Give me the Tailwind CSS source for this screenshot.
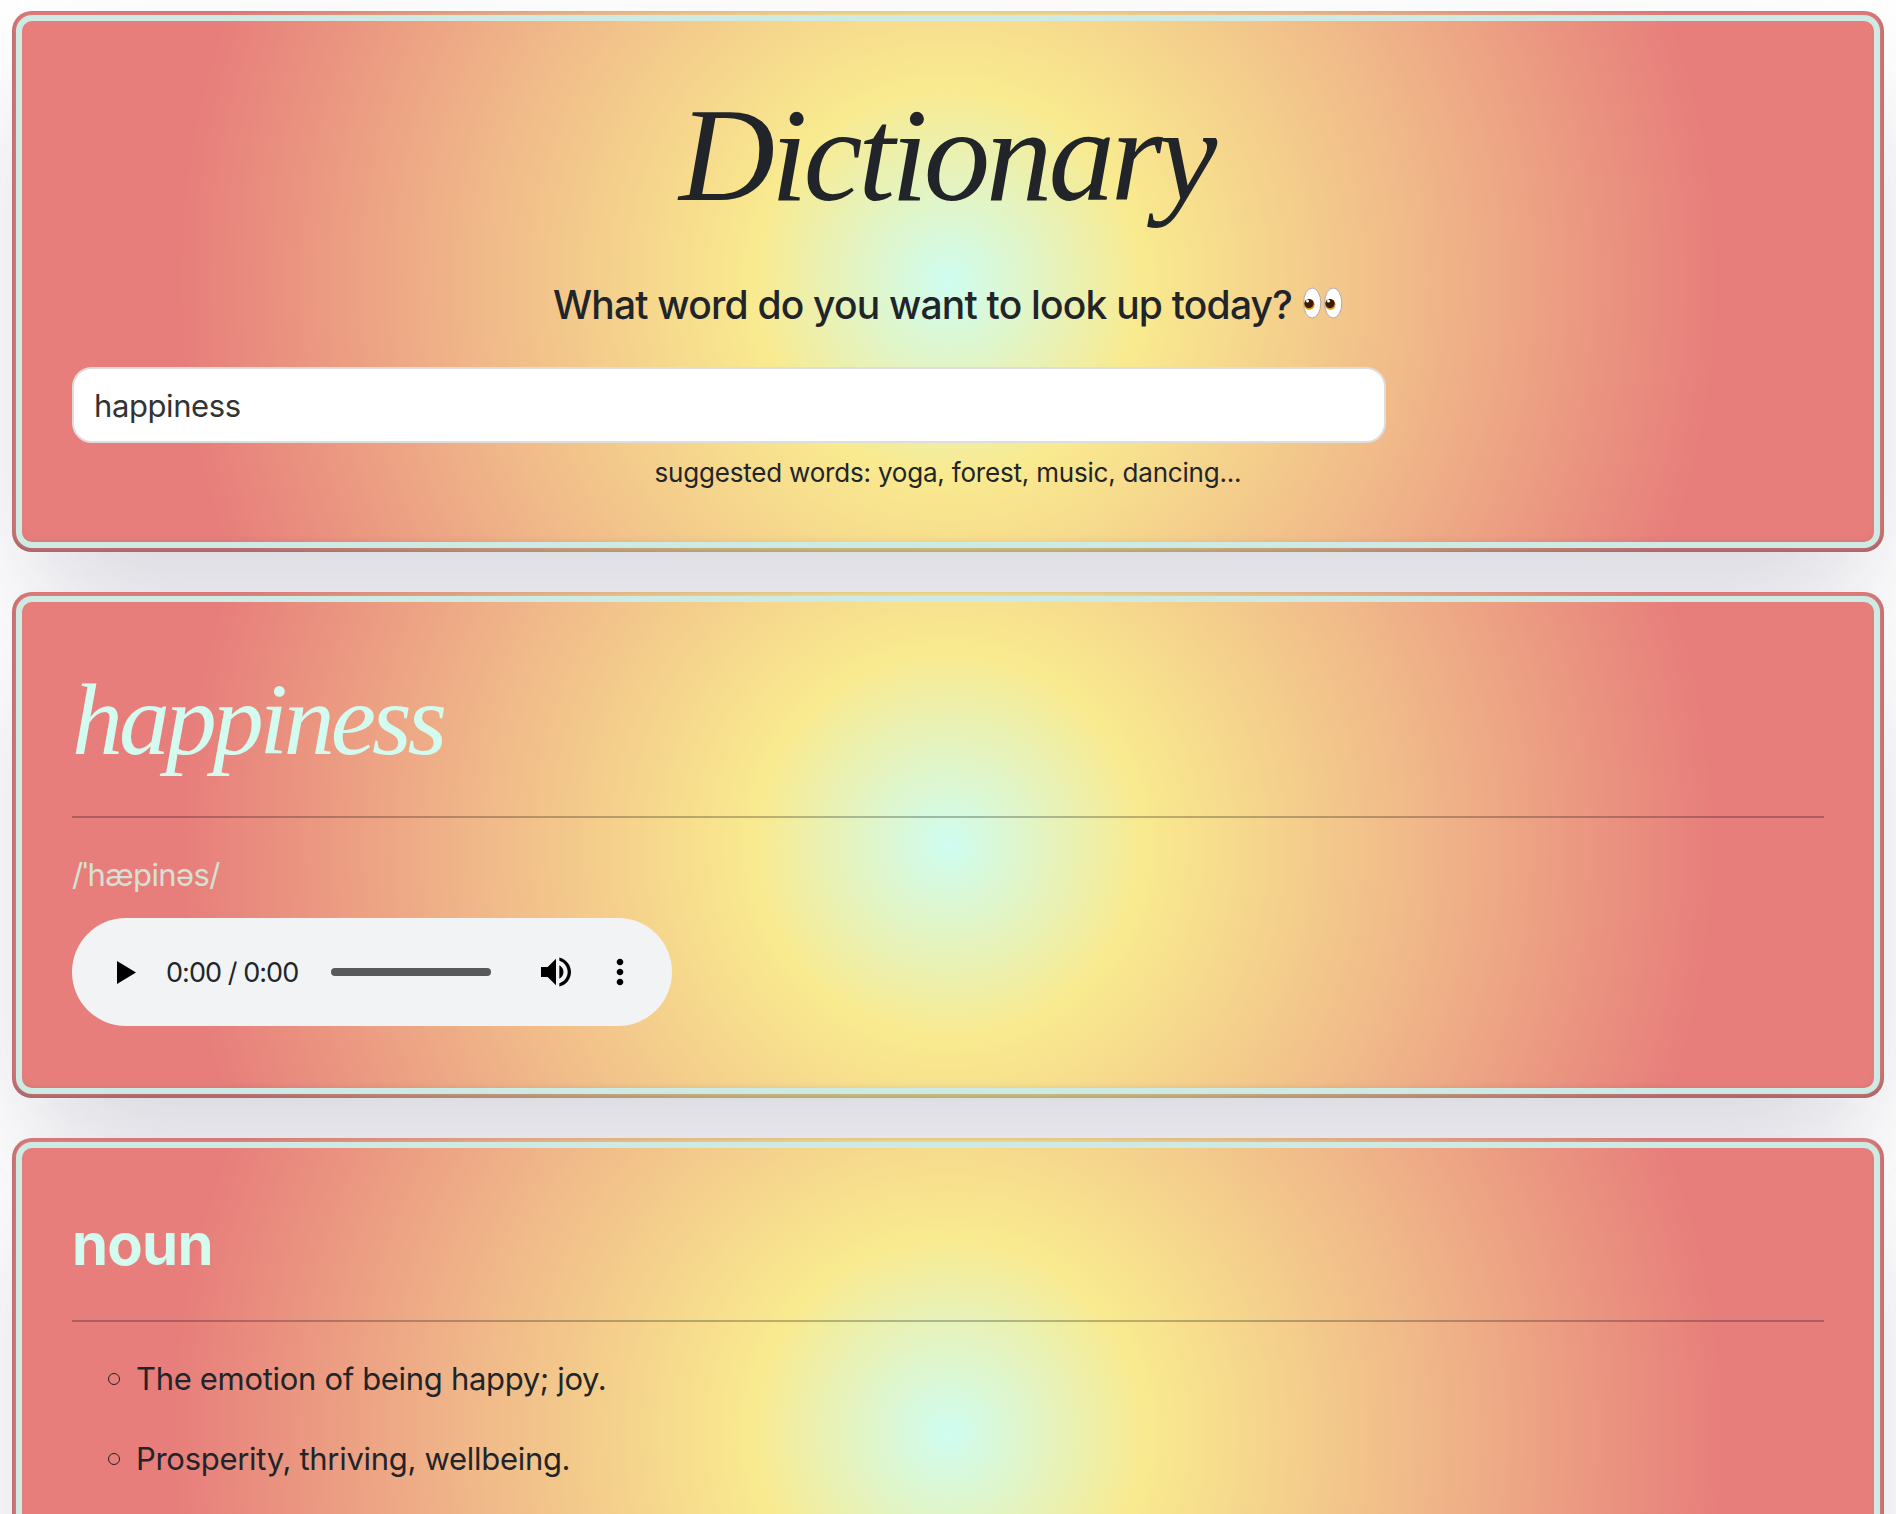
<!DOCTYPE html>
<html lang="en">
<head>
<meta charset="utf-8">
<title>Dictionary</title>
<script src="https://cdn.jsdelivr.net/npm/@tailwindcss/browser@4"></script>
</head>
<body class="bg-white font-['Inter',sans-serif] text-[#212529]">
<main class="flex flex-col gap-10 px-3 pt-[11px] w-[1896px] h-[1514px] overflow-hidden">

<section class="shrink-0 h-[541px] rounded-[20px] p-1 bg-[radial-gradient(circle,#cffdf1_0%,#f9ea8f_20%,#f0b789_49%,#e77e7b_79%)] shadow-[0_60px_120px_-24px_rgba(50,50,93,0.22),inset_0_-4px_12px_0_rgba(10,37,64,0.35)]">
<div class="h-full rounded-2xl border-6 border-[#cdebe4] px-[50px] flex flex-col">
<h1 class="h-[178px] mt-[45px] text-center font-['Liberation_Serif',serif] italic text-[133px] leading-[178px]"><span class="tracking-[-4.2px] relative -left-0.5">Dictionary</span></h1>
<h2 class="mt-[36px] h-12 flex justify-center items-center gap-[11px] text-[39px] leading-[48px] font-medium whitespace-nowrap"><span class="tracking-[-0.8px] pt-0.5">What word do you want to look up today?</span>
<svg class="w-10 h-8 -mt-0.5" viewBox="0 0 40 32"><g stroke="#b3abab" stroke-width="1" fill="#fff"><ellipse cx="9.2" cy="16" rx="8.6" ry="15"/><ellipse cx="30.2" cy="16" rx="8.6" ry="15"/></g><g fill="#d99b1c"><circle cx="6.3" cy="17.5" r="5.3"/><circle cx="27.3" cy="17.5" r="5.3"/></g><g fill="#3a1c08"><circle cx="6" cy="16.6" r="4.6"/><circle cx="27" cy="16.6" r="4.6"/></g><g fill="#fff"><circle cx="4.500" cy="14" r="1.500"/><circle cx="25.500" cy="14" r="1.500"/></g></svg></h2>
<div class="shrink-0 mt-[39px] w-3/4 h-[76px] rounded-[20px] bg-white border-2 border-[#ddd] px-[20px] flex items-center text-[31px] text-[#333]"><span class="tracking-[-0.4px] pt-0.5">happiness</span></div>
<p class="mt-[10px] text-center text-[26px] leading-[39px]"><span class="tracking-[-0.2px]">suggested words: yoga, forest, music, dancing...</span></p>
</div>
</section>

<section class="shrink-0 h-[506px] rounded-[20px] p-1 bg-[radial-gradient(circle,#cffdf1_0%,#f9ea8f_20%,#f0b789_49%,#e77e7b_79%)] shadow-[0_60px_120px_-24px_rgba(50,50,93,0.22),inset_0_-4px_12px_0_rgba(10,37,64,0.35)]">
<div class="h-full rounded-2xl border-6 border-[#cdebe4] px-[50px] flex flex-col items-start">
<h2 class="mt-[54px] h-[128px] text-[#d3fbef] font-['Liberation_Serif',serif] italic text-[102px] leading-[127px]"><span class="tracking-[-4.1px]">happiness</span></h2>
<hr class="mt-[32px] w-full border-t-2 border-black/25">
<p class="mt-[33px] text-[31px] leading-[48px] text-[#d6e0d4]"><span class="tracking-[-0.6px]">/ˈhæpinəs/</span></p>
<div class="mt-[19px] w-[600px] h-[108px] rounded-full bg-[#f1f3f4] flex items-center pl-[45px]">
<svg class="w-[19px] h-[23px]" viewBox="0 0 19 23"><path d="M0 0L19 11.5L0 23z"/></svg>
<span class="ml-[30px] w-[165px] text-[27px] pt-0.5"><span class="tracking-[-0.95px]">0:00 / 0:00</span></span>
<span class="w-40 h-2 rounded-full bg-[#595959]"></span>
<svg class="ml-[45px] w-10 h-10" viewBox="0 0 24 24"><path d="M3 9v6h4l5 5V4L7 9H3zm13.500 3c0-1.770-1.020-3.290-2.500-4.030v8.050c1.480-.73 2.500-2.250 2.500-4.020zM14 3.230v2.060c2.890.86 5 3.540 5 6.710s-2.110 5.850-5 6.710v2.060c4.010-.91 7-4.490 7-8.770s-2.990-7.860-7-8.770z"/></svg>
<svg class="ml-[24px] w-10 h-10" viewBox="0 0 24 24"><path d="M12 8c1.100 0 2-.9 2-2s-.9-2-2-2-2 .9-2 2 .9 2 2 2zm0 2c-1.100 0-2 .9-2 2s.9 2 2 2 2-.9 2-2-.9-2-2-2zm0 6c-1.100 0-2 .9-2 2s.9 2 2 2 2-.9 2-2-.9-2-2-2z"/></svg>
</div>
</div>
</section>

<section class="shrink-0 h-[590px] rounded-[20px] p-1 bg-[radial-gradient(circle,#cffdf1_0%,#f9ea8f_20%,#f0b789_49%,#e77e7b_79%)] shadow-[0_60px_120px_-24px_rgba(50,50,93,0.22),inset_0_-4px_12px_0_rgba(10,37,64,0.35)]">
<div class="h-full rounded-2xl border-6 border-[#cdebe4] px-[50px]">
<h3 class="pt-[62px] h-[128px] text-[#d3fbef] font-bold text-[58px] leading-[68px]"><span class="tracking-[-0.8px]">noun</span></h3>
<hr class="mt-[44px] border-t-2 border-black/25">
<ul class="mt-[33px] flex flex-col gap-8 text-[31px] leading-[48px]">
<li class="flex items-center pl-[36px] gap-[16px]"><span class="w-3 h-3 rounded-full border border-[#212529]"></span><span class="tracking-[-0.32px]">The emotion of being happy; joy.</span></li>
<li class="flex items-center pl-[36px] gap-[16px]"><span class="w-3 h-3 rounded-full border border-[#212529]"></span><span class="tracking-[-0.3px]">Prosperity, thriving, wellbeing.</span></li>
</ul>
</div>
</section>
</main>
</body>
</html>
